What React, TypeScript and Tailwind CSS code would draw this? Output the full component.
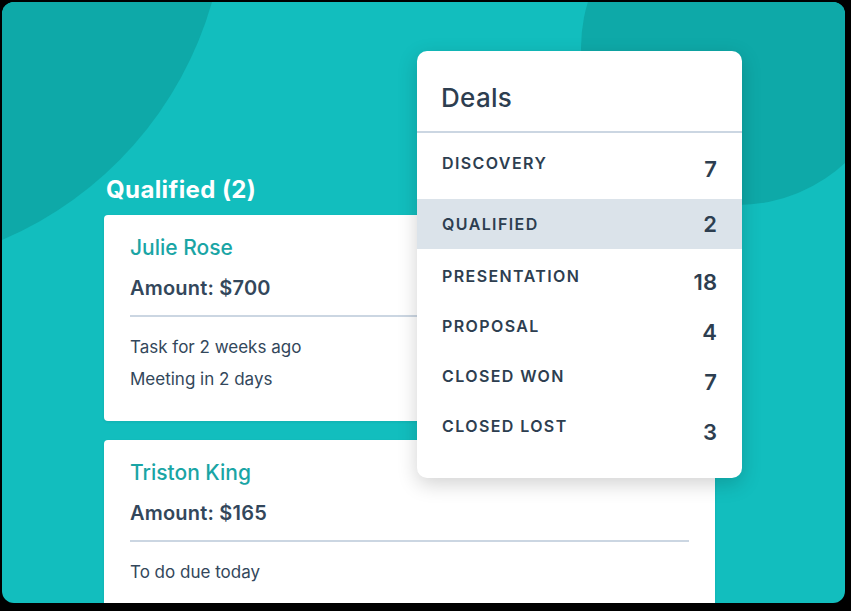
import React from 'react';

type Stage = { label: string; count: number; active?: boolean };

const stages: Stage[] = [
  { label: 'DISCOVERY', count: 7 },
  { label: 'QUALIFIED', count: 2, active: true },
  { label: 'PRESENTATION', count: 18 },
  { label: 'PROPOSAL', count: 4 },
  { label: 'CLOSED WON', count: 7 },
  { label: 'CLOSED LOST', count: 3 },
];

const deals = [
  { name: 'Julie Rose', amount: '$700', notes: ['Task for 2 weeks ago', 'Meeting in 2 days'] },
  { name: 'Triston King', amount: '$165', notes: ['To do due today'] },
];

function DealCard({ name, amount, notes }: { name: string; amount: string; notes: string[] }) {
  return (
    <div className="bg-white rounded-[4px] px-[26px] pt-[19px] pb-[30px] shadow-[0_1px_3px_rgba(0,0,0,0.08)]">
      <div className="text-[21px] leading-[28px] font-medium text-[#1aa5a5]">{name}</div>
      <div className="mt-[12px] text-[20px] leading-[28px] font-semibold text-[#33475b] tracking-[0.2px]">Amount: {amount}</div>
      <div className="mt-[13px] h-[2px] bg-[#cbd6e2]" />
      <div className="mt-[18px] flex flex-col gap-[8px]">
        {notes.map(n => (
          <div key={n} className="text-[17px] leading-[24px] text-[#33475b]">{n}</div>
        ))}
      </div>
    </div>
  );
}

function StageRow({ stage, first }: { stage: Stage; first: boolean }) {
  const label = 'text-[16px] leading-[20px] font-semibold tracking-[1.4px] text-[#2d3e50]';
  const num = 'text-[22px] leading-[24px] font-semibold text-[#2d3e50]';
  if (stage.active) {
    return (
      <div className="h-[50px] px-[25px] flex items-center justify-between bg-[#dbe3ea]">
        <span className={label}>{stage.label}</span>
        <span className={num}>{stage.count}</span>
      </div>
    );
  }
  return (
    <div className={`${first ? 'h-[66px] pt-[20px]' : 'h-[50px] pt-[17px]'} px-[25px] flex items-start justify-between`}>
      <span className={label}>{stage.label}</span>
      <span className={`mt-[4px] ${num}`}>{stage.count}</span>
    </div>
  );
}

export default function App() {
  return (
    <div className="w-[851px] h-[611px] bg-black p-[2px] pr-[6px] pb-[8px]" style={{ fontFamily: 'Inter, "Noto Sans", sans-serif' }}>
      <div className="relative w-full h-full rounded-[12px] bg-[#12bebe] overflow-hidden">
        {/* background blobs */}
        <svg className="absolute inset-0" width="843" height="601" viewBox="0 0 843 601">
          <path d="M0 0 H210 A369 369 0 0 1 0 238 Z" fill="#0ea9a8" />
          <circle cx="736" cy="46" r="157" fill="#0ea9a8" />
        </svg>

        <div className="relative pl-[102px] pt-[172px] w-[713px]">
          <h2 className="pl-[2px] text-[24px] leading-[32px] font-bold text-white tracking-[0.4px]">Qualified (2)</h2>
          <div className="mt-[9px] flex flex-col gap-[19px]">
            {deals.map(d => (
              <DealCard key={d.name} {...d} />
            ))}
          </div>
        </div>

        {/* Deals dropdown panel */}
        <div className="absolute left-[415px] top-[49px] w-[325px] h-[427px] bg-white rounded-[10px] shadow-[0_6px_20px_rgba(0,0,0,0.18)] overflow-hidden">
          <div className="h-[82px] px-[24px] pt-[31px] border-b-2 border-[#cbd6e2]">
            <div className="text-[26px] leading-[32px] font-medium text-[#2d3e50] tracking-[0.3px]">Deals</div>
          </div>
          {stages.map((s, i) => (
            <StageRow key={s.label} stage={s} first={i === 0} />
          ))}
        </div>
      </div>
    </div>
  );
}
